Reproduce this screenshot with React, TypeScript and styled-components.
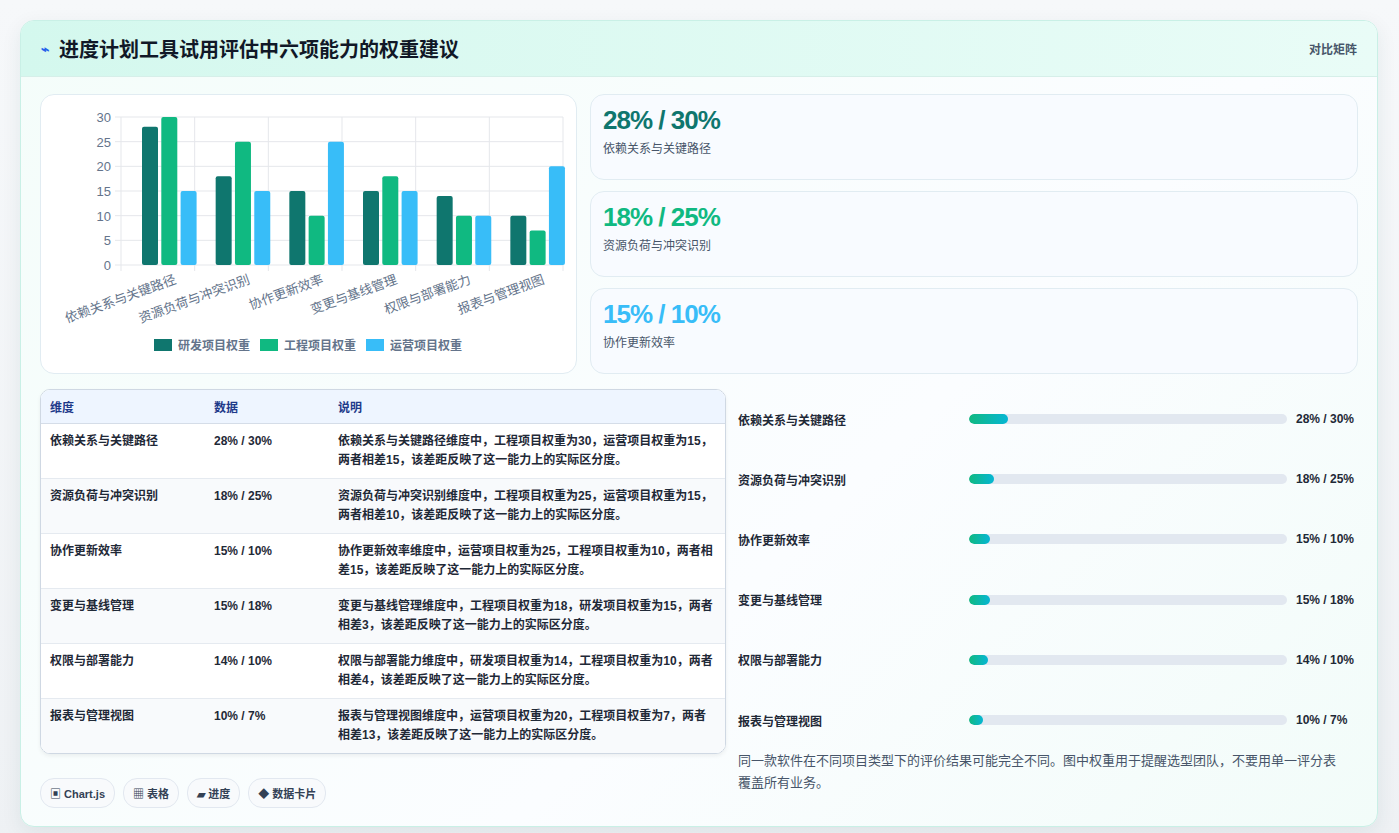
import React from "react";
import styled, { createGlobalStyle } from "styled-components";

const G = createGlobalStyle`
  body{margin:0;background:#f3f5f7;font-family:"Liberation Sans","Noto Sans CJK SC",sans-serif;}
`;
const Page = styled.div`padding:20px 21px 22px 20px;background:linear-gradient(180deg,#f6f8fa,#eef1f4);`;
const Card = styled.div`border:1px solid #c9f0e6;border-radius:14px;background:linear-gradient(135deg,#f4fdfa,#fbfdff 60%,#f2fcf9);box-shadow:0 6px 20px rgba(20,60,60,.08);overflow:hidden;`;
const Header = styled.div`height:55px;display:flex;align-items:center;justify-content:space-between;padding:0 20px;background:linear-gradient(90deg,#d4f8ee,#e9fcf7);border-bottom:1px solid #d6efe9;`;
const Title = styled.h1`margin:0;font-size:20px;font-weight:700;color:#111827;display:flex;align-items:center;gap:10px;`;
const Bolt = styled.span`color:#2563eb;font-size:14px;`;
const HeadLink = styled.span`font-size:12px;font-weight:700;color:#475569;`;
const Body = styled.div`padding:17px 19px 18px 19px;display:flex;flex-direction:column;gap:15px;`;
const TopRow = styled.div`display:grid;grid-template-columns:537px 1fr;column-gap:13px;`;
const BottomRow = styled.div`display:grid;grid-template-columns:686px 1fr;column-gap:12px;`;
const Panel = styled.div`background:#fff;border:1px solid #e1ecf2;border-radius:14px;`;
const ChartBox = styled(Panel)`height:278px;`;
const Kpis = styled.div`display:flex;flex-direction:column;gap:11px;`;
const Kpi = styled(Panel)`height:86px;padding:10px 12px;box-sizing:border-box;background:#f8fbff;`;
const KpiVal = styled.div<{c:string}>`font-size:26px;font-weight:700;letter-spacing:-1px;color:${p=>p.c};line-height:30px;`;
const KpiLab = styled.div`font-size:12px;color:#475569;margin-top:4px;`;
const Left = styled.div`display:flex;flex-direction:column;gap:24px;`;
const Table = styled.table`border-collapse:collapse;width:100%;font-size:12px;background:#fff;border-spacing:0;`;
const TableWrap = styled.div`border:1px solid #cfd8e3;border-radius:10px;overflow:hidden;box-shadow:0 2px 4px rgba(0,0,0,.06);`;
const Th = styled.th`text-align:left;background:#eef5ff;color:#1e3a8a;font-weight:700;padding:0 9px;height:33px;border-bottom:1px solid #d5dde8;`;
const Td = styled.td`padding:8px 9px;vertical-align:top;color:#1f2937;font-weight:700;line-height:19px;height:36px;border-top:1px solid #e5eaf0;`;
const Tr = styled.tr<{alt:boolean}>`background:${p=>p.alt?"#f8fafc":"#fff"};`;
const Chips = styled.div`display:flex;gap:8px;`;
const Chip = styled.span`font-size:11px;font-weight:700;color:#334155;padding:0 9px;height:28px;display:flex;align-items:center;border:1px solid #e2e8f0;border-radius:14px;background:#f8fafc;`;
const Right = styled.div`display:flex;flex-direction:column;padding-top:0;`;
const BarRow = styled.div`display:grid;grid-template-columns:222px 318px 1fr;align-items:center;height:60.2px;column-gap:9px;`;
const BarLabel = styled.span`font-size:12px;font-weight:700;color:#1f2937;`;
const Track = styled.div`height:10px;border-radius:5px;background:#e2e8f0;overflow:hidden;`;
const Fill = styled.div`height:100%;border-radius:5px;background:linear-gradient(90deg,#10b981,#06b6d4);`;
const BarVal = styled.span`font-size:12px;font-weight:700;color:#1f2937;`;
const Note = styled.p`margin:0;font-size:13px;line-height:22px;color:#475569;padding-right:10px;`;

const dims=["依赖关系与关键路径","资源负荷与冲突识别","协作更新效率","变更与基线管理","权限与部署能力","报表与管理视图"];
const data=[[28,30,15],[18,25,15],[15,10,25],[15,18,15],[14,10,10],[10,7,20]];
const vals=["28% / 30%","18% / 25%","15% / 10%","15% / 18%","14% / 10%","10% / 7%"];
const descs=[
"依赖关系与关键路径维度中，工程项目权重为30，运营项目权重为15，两者相差15，该差距反映了这一能力上的实际区分度。",
"资源负荷与冲突识别维度中，工程项目权重为25，运营项目权重为15，两者相差10，该差距反映了这一能力上的实际区分度。",
"协作更新效率维度中，运营项目权重为25，工程项目权重为10，两者相差15，该差距反映了这一能力上的实际区分度。",
"变更与基线管理维度中，工程项目权重为18，研发项目权重为15，两者相差3，该差距反映了这一能力上的实际区分度。",
"权限与部署能力维度中，研发项目权重为14，工程项目权重为10，两者相差4，该差距反映了这一能力上的实际区分度。",
"报表与管理视图维度中，运营项目权重为20，工程项目权重为7，两者相差13，该差距反映了这一能力上的实际区分度。"];
const colors=["#0f766e","#10b981","#38bdf8"];
const names=["研发项目权重","工程项目权重","运营项目权重"];

function Chart(){
  const x0=80,x1=522,yTop=22,yBot=170,gw=(x1-x0)/6;
  const y=(v:number)=>yBot-(v/30)*(yBot-yTop);
  return <svg width="535" height="278" style={{display:"block"}}>
    {[0,5,10,15,20,25,30].map(v=><g key={v}>
      <line x1={x0-6} x2={x1} y1={y(v)} y2={y(v)} stroke="#e5e7eb"/>
      <text x={x0-10} y={y(v)+5} fontSize="13" fill="#64748b" textAnchor="end" fontFamily="Liberation Sans">{v}</text></g>)}
    {[0,1,2,3,4,5,6].map(i=><line key={i} x1={x0+i*gw} x2={x0+i*gw} y1={yTop} y2={yBot+6} stroke="#e5e7eb"/>)}
    {data.map((d,i)=>d.map((v,j)=><rect key={i+"-"+j} x={x0+i*gw+21+j*19.3} y={y(v)} width="16" height={yBot-y(v)} rx="2" fill={colors[j]}/>))}
    {dims.map((n,i)=><text key={n} transform={`translate(${x0+i*gw+56},${yBot+18}) rotate(-20)`} textAnchor="end" fontSize="13" fill="#64748b" fontFamily="Liberation Sans,Noto Sans CJK SC">{n}</text>)}
    {names.map((n,i)=><g key={n} transform={`translate(${113+i*106},244)`}>
      <rect width="18" height="12" fill={colors[i]}/>
      <text x="24" y="11" fontSize="12" fontWeight="700" fill="#64748b" fontFamily="Liberation Sans,Noto Sans CJK SC">{n}</text></g>)}
  </svg>;
}

export default function App(){
  return <Page><G/><Card>
    <Header><Title><Bolt>⌁</Bolt>进度计划工具试用评估中六项能力的权重建议</Title><HeadLink>对比矩阵</HeadLink></Header>
    <Body>
      <TopRow>
        <ChartBox><Chart/></ChartBox>
        <Kpis>
          <Kpi><KpiVal c="#0f766e">28% / 30%</KpiVal><KpiLab>依赖关系与关键路径</KpiLab></Kpi>
          <Kpi><KpiVal c="#10b981">18% / 25%</KpiVal><KpiLab>资源负荷与冲突识别</KpiLab></Kpi>
          <Kpi><KpiVal c="#38bdf8">15% / 10%</KpiVal><KpiLab>协作更新效率</KpiLab></Kpi>
        </Kpis>
      </TopRow>
      <BottomRow>
        <Left>
          <TableWrap><Table>
            <thead><tr><Th style={{width:146}}>维度</Th><Th style={{width:106}}>数据</Th><Th>说明</Th></tr></thead>
            <tbody>{dims.map((d,i)=><Tr key={d} alt={i%2===1}><Td>{d}</Td><Td>{vals[i]}</Td><Td>{descs[i]}</Td></Tr>)}</tbody>
          </Table></TableWrap>
          <Chips><Chip>▣ Chart.js</Chip><Chip>▦ 表格</Chip><Chip>▰ 进度</Chip><Chip>◆ 数据卡片</Chip></Chips>
        </Left>
        <Right>
          {dims.map((d,i)=><BarRow key={d}><BarLabel>{d}</BarLabel><Track><Fill style={{width:`${data[i][0]*1.39}px`}}/></Track><BarVal>{vals[i]}</BarVal></BarRow>)}
          <Note>同一款软件在不同项目类型下的评价结果可能完全不同。图中权重用于提醒选型团队，不要用单一评分表覆盖所有业务。</Note>
        </Right>
      </BottomRow>
    </Body>
  </Card></Page>;
}
